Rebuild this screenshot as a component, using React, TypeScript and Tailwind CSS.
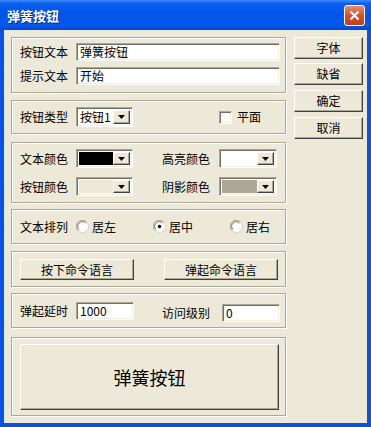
const raised =
  "bg-[#ece9d8] border border-t-white border-l-white border-r-[#404040] border-b-[#404040] shadow-[inset_-1px_-1px_0_#aca899]";
const sunken =
  "border border-t-[#aca899] border-l-[#aca899] border-r-white border-b-white shadow-[inset_1px_1px_0_#716f64,inset_-1px_-1px_0_#f1efe2]";
const group =
  "w-[275px] border border-[#aca899] shadow-[inset_1px_1px_0_#fff,1px_1px_0_#fff]";

function Arrow() {
  return (
    <div className={`${raised} w-[17px] h-full flex items-center justify-center shrink-0`}>
      <svg width="7" height="4" viewBox="0 0 7 4">
        <path d="M0 0h7L3.5 4z" fill="#000" />
      </svg>
    </div>
  );
}

function Combo({ w, h, color, text }: { w: number; h: number; color?: string; text?: string }) {
  return (
    <div className={`${sunken} flex p-[2px] bg-white shrink-0`} style={{ width: w, height: h }}>
      <div className="flex-1 flex items-center pl-[1px] text-[12px]" style={{ background: color ?? "#fff" }}>
        {text}
      </div>
      <Arrow />
    </div>
  );
}

function Input({ w, value }: { w: number; value: string }) {
  return (
    <div className={`${sunken} bg-white h-[18px] flex items-center pl-[3px] text-[12px] shrink-0`} style={{ width: w }}>
      {value}
    </div>
  );
}

function Radio({ checked, label, last }: { checked?: boolean; label: string; last?: boolean }) {
  return (
    <div className={`${last ? "" : "w-[77px]"} shrink-0 flex items-center`}>
      <svg width="13" height="13" viewBox="0 0 13 13">
        <circle cx="6.5" cy="6.5" r="6" fill="#fff" stroke="#d4d0c8" />
        <path d="M2 10.5A6 6 0 0 1 10.5 2" fill="none" stroke="#aca899" />
        <path d="M3 9.5A4.6 4.6 0 0 1 9.5 3" fill="none" stroke="#716f64" />
        {checked && <circle cx="6.5" cy="6.5" r="1.7" fill="#000" />}
      </svg>
      <span className="ml-[3px]">{label}</span>
    </div>
  );
}

function Btn({ children, className }: { children: React.ReactNode; className?: string }) {
  return (
    <div className={`${raised} shrink-0 flex items-center justify-center ${className ?? ""}`}>{children}</div>
  );
}

export default function App() {
  return (
    <div className="w-[371px] h-[427px] flex flex-col font-['Noto_Sans_CJK_SC',sans-serif] text-[12px] text-black leading-none">
      <div className="h-[30px] flex items-center justify-between pl-[7px] pr-[6px] bg-[linear-gradient(to_bottom,#3d8cf8_0%,#0a5ef0_12%,#0055e6_45%,#0058ec_85%,#0046cc_100%)]">
        <span className="text-white font-bold text-[13px] [text-shadow:1px_1px_0_#0a2a8a]">弹簧按钮</span>
        <div className="w-[21px] h-[21px] rounded-[3px] border border-white bg-[linear-gradient(to_bottom,#e98a6c,#d9502a_50%,#c33e17)] flex items-center justify-center">
          <svg width="11" height="11" viewBox="0 0 11 11">
            <path d="M1.5 1.5l8 8M9.5 1.5l-8 8" stroke="#fff" strokeWidth="2" />
          </svg>
        </div>
      </div>
      <div className="flex-1 flex bg-[#ece9d8] border-x-4 border-b-4 border-[#0a52e0] pl-[7px] pt-[7px]">
        <div className="flex flex-col">
          {/* 文本 */}
          <div className={`${group} h-[56px] pt-[5px] pl-[8px] flex flex-col gap-[6px]`}>
            <div className="flex items-center h-[18px]">
              <span className="w-[56px] shrink-0">按钮文本</span>
              <Input w={204} value="弹簧按钮" />
            </div>
            <div className="flex items-center h-[18px]">
              <span className="w-[56px] shrink-0">提示文本</span>
              <Input w={204} value="开始" />
            </div>
          </div>
          {/* 类型 */}
          <div className={`${group} mt-[7px] h-[34px] pl-[8px] flex items-center`}>
            <span className="w-[56px] shrink-0">按钮类型</span>
            <Combo w={57} h={20} text="按钮1" />
            <div className={`${sunken} ml-[86px] w-[13px] h-[13px] bg-white shrink-0`} />
            <span className="ml-[5px]">平面</span>
          </div>
          {/* 颜色 */}
          <div className={`${group} mt-[8px] h-[61px] pt-[6px] pl-[8px] flex flex-col gap-[9px]`}>
            <div className="flex items-center">
              <span className="w-[56px] shrink-0">文本颜色</span>
              <Combo w={57} h={19} color="#000" />
              <span className="ml-[29px] w-[57px] shrink-0">高亮颜色</span>
              <Combo w={58} h={19} color="#fff" />
            </div>
            <div className="flex items-center">
              <span className="w-[56px] shrink-0">按钮颜色</span>
              <Combo w={57} h={19} color="#ece9d8" />
              <span className="ml-[29px] w-[57px] shrink-0">阴影颜色</span>
              <Combo w={58} h={19} color="#aca899" />
            </div>
          </div>
          {/* 排列 */}
          <div className={`${group} mt-[6px] h-[35px] pl-[8px] flex items-center`}>
            <span className="w-[56px] shrink-0">文本排列</span>
            <Radio label="居左" />
            <Radio checked label="居中" />
            <Radio last label="居右" />
          </div>
          {/* 命令语言 */}
          <div className={`${group} mt-[7px] h-[36px] pl-[8px] pt-[7px] flex`}>
            <Btn className="w-[114px] h-[21px]">按下命令语言</Btn>
            <Btn className="ml-[30px] w-[114px] h-[21px]">弹起命令语言</Btn>
          </div>
          {/* 延时 */}
          <div className={`${group} mt-[6px] h-[35px] pl-[8px] pt-[8px] flex items-start`}>
            <div className="flex items-center">
              <span className="w-[56px] shrink-0">弹起延时</span>
              <Input w={58} value="1000" />
            </div>
            <div className="flex items-center ml-[28px] mt-[2px]">
              <span className="w-[60px] shrink-0">访问级别</span>
              <Input w={58} value="0" />
            </div>
          </div>
          {/* 预览 */}
          <div className={`${group} mt-[9px] h-[79px] pl-[8px] pt-[6px]`}>
            <Btn className="w-[259px] h-[66px] text-[18px]">弹簧按钮</Btn>
          </div>
        </div>
        <div className="ml-[8px] w-[69px] flex flex-col">
          <Btn className="h-[22px]">字体</Btn>
          <Btn className="h-[22px] mt-[4px]">缺省</Btn>
          <Btn className="h-[22px] mt-[5px]">确定</Btn>
          <Btn className="h-[22px] mt-[5px]">取消</Btn>
        </div>
      </div>
    </div>
  );
}
